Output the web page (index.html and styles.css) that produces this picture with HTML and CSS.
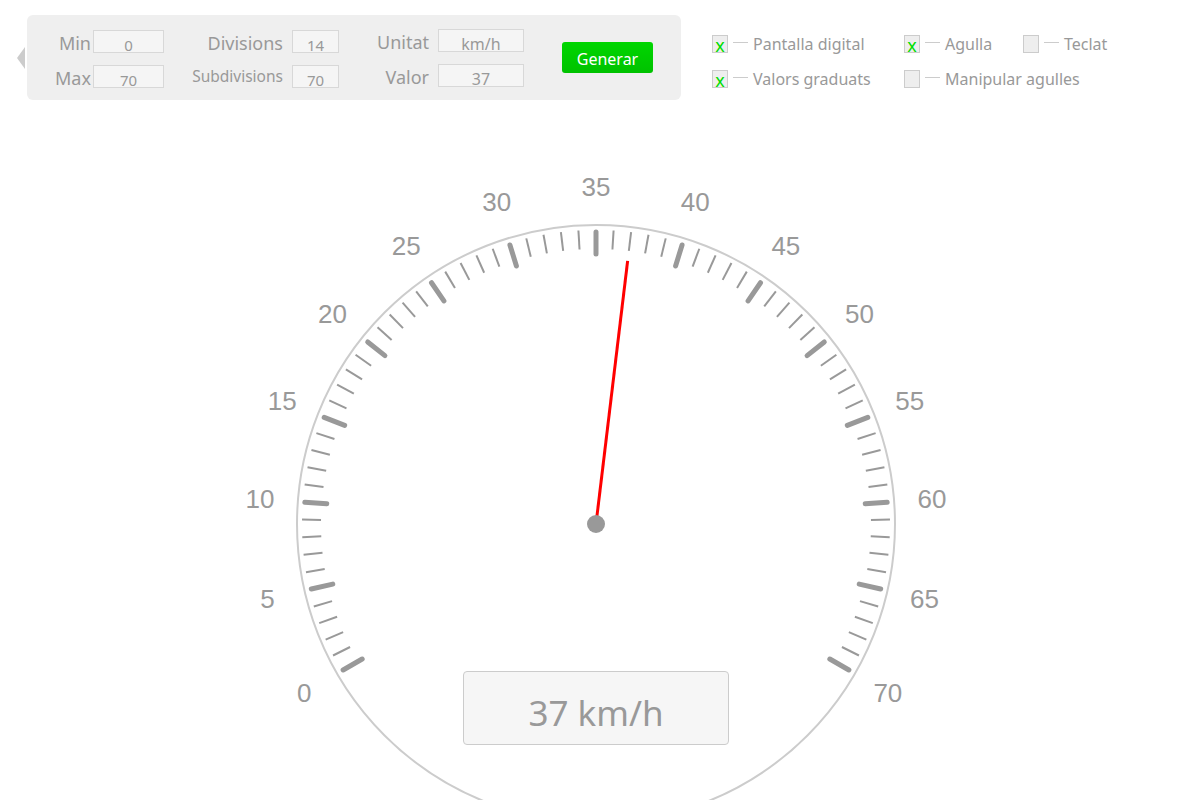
FILE: index.html
```html
<!DOCTYPE html>
<html lang="ca">
<head>
<meta charset="utf-8">
<title>Velocímetre</title>
<link rel="stylesheet" href="styles.css">
</head>
<body>
<div class="top">
  <div class="arrow"></div>
  <div class="panel">
    <div class="group g1">
      <span class="lbl">Min</span><div class="field">0</div>
      <span class="lbl">Max</span><div class="field">70</div>
    </div>
    <div class="group g2">
      <span class="lbl">Divisions</span><div class="field">14</div>
      <span class="lbl small">Subdivisions</span><div class="field">70</div>
    </div>
    <div class="group g3">
      <span class="lbl">Unitat</span><div class="field">km/h</div>
      <span class="lbl">Valor</span><div class="field">37</div>
    </div>
    <button class="btn">Generar</button>
  </div>
  <div class="checks">
    <div class="chk"><span class="box">x</span><span class="dash"></span><span class="ctext">Pantalla digital</span></div>
    <div class="chk"><span class="box">x</span><span class="dash"></span><span class="ctext">Agulla</span></div>
    <div class="chk"><span class="box"></span><span class="dash"></span><span class="ctext">Teclat</span></div>
    <div class="chk"><span class="box">x</span><span class="dash"></span><span class="ctext">Valors graduats</span></div>
    <div class="chk"><span class="box"></span><span class="dash"></span><span class="ctext">Manipular agulles</span></div>
  </div>
</div>

<div class="gauge">
  <svg class="dial" width="800" height="690" viewBox="0 0 800 690" xmlns="http://www.w3.org/2000/svg">
    <g transform="translate(400 414)">
      <circle class="rim" cx="0" cy="0" r="299"></circle>
      <g id="ticks"></g>
      <g id="labels"></g>
      <line class="needle" x1="0" y1="0" x2="0" y2="-265" transform="rotate(6.857)"></line>
      <circle class="hub" cx="0" cy="0" r="9"></circle>
    </g>
  </svg>
  <div class="display">37 km/h</div>
</div>
<script src="script.js"></script>
</body>
</html>
```

FILE: styles.css
```css
* { box-sizing: border-box; }
html, body { margin: 0; padding: 0; background: #fff; overflow: hidden; }
body {
  width: 1200px;
  height: 800px;
  font-family: "Noto Sans", "Open Sans", sans-serif;
  color: #999;
}

.top {
  display: flex;
  align-items: flex-start;
  height: 100px;
}

.arrow {
  width: 0;
  height: 0;
  border-right: 8px solid #ccc;
  border-top: 11px solid transparent;
  border-bottom: 11px solid transparent;
  margin: 47px 2px 0 17px;
}

.panel {
  margin-top: 15px;
  width: 654px;
  height: 85px;
  background: #efefef;
  border-radius: 6px;
  display: flex;
  align-items: flex-start;
  padding-top: 15px;
}

.group {
  display: grid;
  grid-template-rows: 23px 23px;
  row-gap: 12px;
}
.g1 { grid-template-columns: 40px 71px; column-gap: 2px; margin-left: 24px; }
.g2 { grid-template-columns: 96px 47px; column-gap: 9px; margin-left: 23px; }
.g3 { grid-template-columns: 59px 86px; column-gap: 9px; margin-left: 31px; margin-top: -1px; }

.lbl {
  text-align: right;
  font-size: 18px;
  line-height: 23px;
  padding-top: 2px;
  white-space: nowrap;
}
.lbl.small { font-size: 15.5px; padding-top: 0; }

.field {
  height: 23px;
  border: 1px solid #d8d8d8;
  background: #f5f5f5;
  font-size: 16px;
  line-height: 20px;
  padding-top: 4px;
  text-align: center;
  color: #999;
}
.g1 .field, .g2 .field { font-size: 15px; }

.btn {
  margin: 12px 0 0 38px;
  width: 91px;
  height: 31px;
  border: none;
  border-radius: 3px;
  background: linear-gradient(#00d600, #00c200);
  color: #fff;
  font-family: "Noto Sans", "Open Sans", sans-serif;
  font-size: 16px;
  padding: 3px 0 0;
}

.checks {
  display: grid;
  grid-template-columns: 192px 119px auto;
  row-gap: 17px;
  margin: 35px 0 0 31px;
}
.chk {
  display: flex;
  align-items: flex-start;
  height: 18px;
}
.box {
  flex-shrink: 0;
  width: 16px;
  height: 18px;
  border: 1px solid #ccc;
  background: #eee;
  color: #00dd00;
  font-size: 18px;
  line-height: 19px;
  text-align: center;
}
.dash {
  flex-shrink: 0;
  width: 15px;
  height: 1px;
  background: #ccc;
  margin: 7px 5px 0 5px;
}
.ctext {
  font-size: 16px;
  line-height: 18px;
  white-space: nowrap;
}

.gauge {
  position: relative;
  margin: 10px 0 0 196px;
  width: 800px;
  height: 690px;
}
.dial { display: block; }

.rim { fill: none; stroke: #ccc; stroke-width: 2; }
.tick { stroke: #999; }
.tick.major { stroke-width: 5; stroke-linecap: round; }
.tick.minor { stroke-width: 2; }
.num {
  fill: #999;
  font-family: "Liberation Sans", Arial, sans-serif;
  font-size: 26px;
}
.needle { stroke: #ff0000; stroke-width: 3; }
.hub { fill: #999; }

.display {
  position: absolute;
  left: 267px;
  top: 561px;
  width: 266px;
  height: 74px;
  border: 1px solid #ccc;
  border-radius: 4px;
  background: #f6f6f6;
  display: flex;
  align-items: center;
  justify-content: center;
  padding-top: 9px;
  font-size: 35px;
  line-height: 1;
  color: #999;
}
```

FILE: script.js
```js
(function () {
  var NS = 'http://www.w3.org/2000/svg';
  var ticks = document.getElementById('ticks');
  var labels = document.getElementById('labels');
  var min = 0, max = 70, divisions = 14, subdivisions = 70, sweep = 240;
  var perMajor = subdivisions / divisions;
  for (var i = 0; i <= subdivisions; i++) {
    var a = -sweep / 2 + i * sweep / subdivisions;
    var major = i % perMajor === 0;
    var line = document.createElementNS(NS, 'line');
    line.setAttribute('x1', 0);
    line.setAttribute('x2', 0);
    line.setAttribute('y1', major ? -292 : -294);
    line.setAttribute('y2', major ? -270 : -275);
    line.setAttribute('transform', 'rotate(' + a.toFixed(4) + ')');
    line.setAttribute('class', major ? 'tick major' : 'tick minor');
    ticks.appendChild(line);
    if (major) {
      var rad = a * Math.PI / 180;
      var t = document.createElementNS(NS, 'text');
      t.setAttribute('x', (337 * Math.sin(rad)).toFixed(2));
      t.setAttribute('y', (-337 * Math.cos(rad)).toFixed(2));
      t.setAttribute('dy', '0.36em');
      t.setAttribute('text-anchor', 'middle');
      t.setAttribute('class', 'num');
      t.textContent = String(min + (max - min) * i / subdivisions);
      labels.appendChild(t);
    }
  }
})();
```
